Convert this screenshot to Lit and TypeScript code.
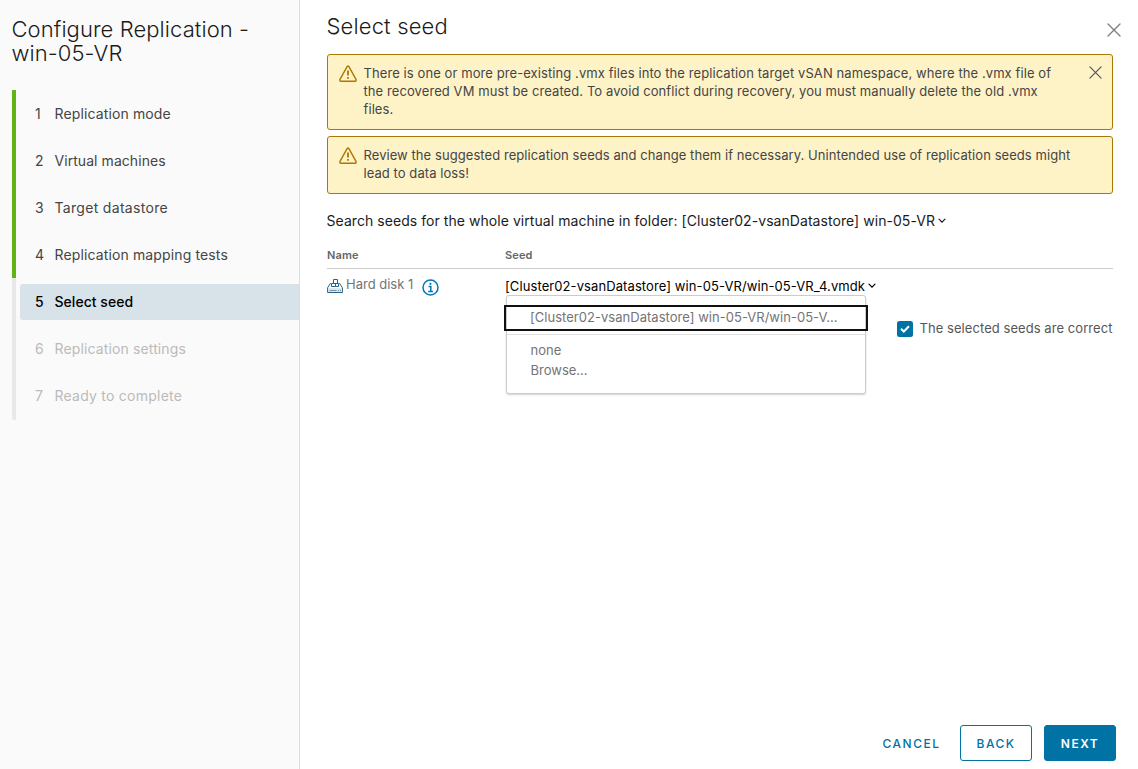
import { LitElement, html, css } from "lit";
import { customElement, property, state } from "lit/decorators.js";
import { classMap } from "lit/directives/class-map.js";

const closeIcon = (size: number) => html`<svg width=${size} height=${size} viewBox="0 0 14 14" fill="none" stroke="currentColor" stroke-width="1.3" stroke-linecap="round"><path d="M1 1L13 13M13 1L1 13" /></svg>`;
const caret = html`<svg class="caret" width="8" height="6" viewBox="0 0 8 6" fill="none" stroke="currentColor" stroke-width="1.2" stroke-linecap="round"><path d="M1 1.2L4 4.2L7 1.2" /></svg>`;

@customElement("wizard-alert")
class WizardAlert extends LitElement {
  @property({ type: Array }) lines: string[] = [];
  @property({ type: Boolean }) closable = false;

  static styles = css`
    :host {
      display: flex;
      box-sizing: border-box;
      padding: 9px 10px 11px 11px;
      border: 1px solid #ad7600;
      border-radius: 3px;
      background: #fef3c7;
      color: #454545;
    }
    .icon { flex: none; display: block; width: 18px; height: 18px; margin: 1px 6.5px 0 0; }
    .text { flex: 1; font-size: 13px; line-height: 18px; letter-spacing: 0.085px; white-space: nowrap; }
    .long { letter-spacing: 0.065px; }
    .close { color: #565656; height: 14px; margin-top: 2px; }
    .close svg { display: block; }
  `;

  render() {
    return html`
      <svg class="icon" viewBox="0 0 18 18" fill="none" stroke="#ad7600" stroke-width="1.4" stroke-linejoin="round">
        <path d="M8.1 1.7Q9 .4 9.9 1.7L17 14.3Q17.6 16 16 16.2H2Q.4 16 1 14.3Z" />
        <path d="M9 5.4V10.4M9 12V13.8" stroke-width="1.8" />
      </svg>
      <div class="text">${this.lines.map((l) => html`<div class=${classMap({ long: !this.closable })}>${l}</div>`)}</div>
      ${this.closable ? html`<span class="close">${closeIcon(13)}</span>` : null}
    `;
  }
}

@customElement("app-root")
class AppRoot extends LitElement {
  @state() private current = 5;

  private steps = [
    "Replication mode",
    "Virtual machines",
    "Target datastore",
    "Replication mapping tests",
    "Select seed",
    "Replication settings",
    "Ready to complete",
  ];

  static styles = css`
    :host {
      display: flex;
      width: 1138px;
      height: 769px;
      overflow: hidden;
      box-sizing: border-box;
      background: #fff;
      font-family: Inter, "Open Sans", sans-serif;
      color: #666;
    }
    * { box-sizing: border-box; }
    h1, h2 { margin: 0; color: #1b1b1b; font-size: 22px; font-weight: 300; line-height: 24px; letter-spacing: 0.08px; white-space: nowrap; }
    h2 { letter-spacing: 0.15px; }
    .side { flex: none; width: 300px; background: #fafafa; border-right: 1px solid #ddd; padding: 17px 0 0 11.5px; }
    .steps { margin: 25px 0 0 0.5px; }
    .step { display: flex; height: 47px; border-left: 4px solid #60b515; padding: 6px 0 5px 4px; }
    .step.upcoming, .step.current { border-left-color: #e8e8e8; }
    .step:last-child { height: 48px; padding-bottom: 6px; border-bottom-left-radius: 2px; }
    .label { flex: 1; display: flex; align-items: center; padding: 0 0 2px 15px; border-radius: 3px 0 0 3px; font-size: 14px; letter-spacing: 0.13px; color: #454545; }
    .num { width: 19.5px; }
    .s2 { letter-spacing: 0.06px; }
    .s3 { letter-spacing: 0.31px; }
    .s7 { letter-spacing: 0.24px; }
    .current .label { background: #d8e3e9; color: #000; font-weight: 500; letter-spacing: 0.03px; }
    .upcoming .label { color: #bababa; }

    .main { flex: 1; min-width: 0; display: flex; flex-direction: column; padding: 14px 17px 8px 27px; }
    .head { display: flex; justify-content: space-between; height: 40px; margin-left: -0.5px; }
    .head svg { display: block; margin-top: 9px; color: #7c7c7c; }
    .body { width: 786px; display: flex; flex-direction: column; }
    .alerts { display: grid; gap: 6px; }
    .alerts .first { height: 76px; }
    .alerts .second { height: 58px; }
    .caret { margin-left: 3px; }
    .search { display: flex; align-items: center; height: 20px; margin: 16px 0 0 -0.5px; font-size: 14px; letter-spacing: 0.055px; color: #1b1b1b; white-space: nowrap; }
    .search .caret { margin-top: 2px; }
    .grid { display: grid; grid-template-columns: 178px 1fr; }
    .thead { margin-top: 15px; height: 24px; align-items: center; padding-bottom: 3px; border-bottom: 1px solid #ccc; font-size: 11px; font-weight: 600; letter-spacing: 0.15px; color: #666; }
    .row { height: 50px; padding-top: 7px; }
    .disk { display: flex; height: 22px; font-size: 13px; color: #747474; }
    .disk .name { margin: 0 7.5px 0 3px; line-height: 17px; width: 68px; white-space: nowrap; }
    .drive { margin-top: 2px; }
    .info { margin-top: 2.5px; }
    .seed { position: relative; }
    .value { display: flex; align-items: center; height: 20px; font-size: 13px; letter-spacing: 0.095px; color: #000; white-space: nowrap; }
    .menu { position: absolute; top: 19px; left: 1px; width: 360px; height: 99px; border: 1px solid #ccc; border-radius: 3px; background: #fff; box-shadow: 0 1px 2px rgba(0, 0, 0, 0.18); font-size: 13px; color: #747474; white-space: nowrap; }
    .focus { height: 26px; margin: 9px -3px 0; padding-left: 24px; border: 2px solid #111; line-height: 21px; letter-spacing: 0.03px; }
    .rule { height: 1px; margin: 3px 0 5px; background: #e0e0e0; }
    .item { height: 20px; padding-left: 23.5px; line-height: 20px; }
    .confirm { display: flex; align-items: center; align-self: flex-end; height: 20px; font-size: 13px; letter-spacing: 0.06px; color: #565656; white-space: nowrap; }
    .confirm span { width: 193.5px; padding-bottom: 2px; }
    .check { margin-right: 6.5px; }
    .foot { display: flex; justify-content: flex-end; margin: auto 5px 0 0; }
    .btn { height: 36px; width: 72px; border: 1px solid #0072a3; border-radius: 3px; background: #fff; color: #0072a3; font: 500 12px/34px Inter, sans-serif; letter-spacing: 1.5px; text-align: center; padding: 1px 0 0; white-space: nowrap; }
    .btn.text { border-color: transparent; width: 90px; margin-right: 3.5px; }
    .btn.solid { background: #0072a3; color: #fff; font-weight: 600; margin-left: 12px; }
  `;

  render() {
    return html`
      <nav class="side">
        <h1><div>Configure Replication -</div><div>win-05-VR</div></h1>
        <div class="steps">
          ${this.steps.map((name, i) => html`
            <div class=${classMap({ step: true, current: i + 1 === this.current, upcoming: i + 1 > this.current })}>
              <div class="label"><span class="num">${i + 1}</span><span class="s${i + 1}">${name}</span></div>
            </div>`)}
        </div>
      </nav>
      <main class="main">
        <div class="head"><h2>Select seed</h2>${closeIcon(14)}</div>
        <div class="body">
          <div class="alerts">
            <wizard-alert class="first" closable .lines=${[
              "There is one or more pre-existing .vmx files into the replication target vSAN namespace, where the .vmx file of",
              "the recovered VM must be created. To avoid conflict during recovery, you must manually delete the old .vmx",
              "files.",
            ]}></wizard-alert>
            <wizard-alert class="second" .lines=${[
              "Review the suggested replication seeds and change them if necessary. Unintended use of replication seeds might",
              "lead to data loss!",
            ]}></wizard-alert>
          </div>
          <div class="search"><span>Search seeds for the whole virtual machine in folder: [Cluster02-vsanDatastore] win-05-VR</span>${caret}</div>
          <div class="grid thead"><span>Name</span><span>Seed</span></div>
          <div class="grid row">
            <div class="disk">
              <svg class="drive" width="16" height="16" viewBox="0 0 16 16" fill="none" stroke="#25628a">
                <path d="M4 5.5H3.3L.6 9.8V14.5H15.4V9.8L12.7 5.5H12" />
                <path d="M1.1 10.2H14.9V14H1.1Z" fill="#d5e5ee" stroke="none" />
                <path d="M4.5 5.5H8.5V8.5H4.5ZM8.5 5.5H11.5V8.5H8.5ZM6.5 1.5H10.5V5.5H6.5Z" fill="#fff" />
                <path d="M2.5 12.5H9.5M11 12.5H12M13 12.5H14" stroke="#8794a0" />
              </svg>
              <span class="name">Hard disk 1</span>
              <svg class="info" width="17" height="17" viewBox="0 0 17 17" fill="none" stroke="#0079b8" stroke-width="1.5">
                <circle cx="8.5" cy="8.5" r="7.5" />
                <path d="M6.6 7.5H8.8V12.5M6.2 12.6H11" />
                <circle cx="8.4" cy="4.8" r="1.1" fill="#0079b8" stroke="none" />
              </svg>
            </div>
            <div class="seed">
              <div class="value"><span>[Cluster02-vsanDatastore] win-05-VR/win-05-VR_4.vmdk</span>${caret}</div>
              <div class="menu">
                <div class="focus">[Cluster02-vsanDatastore] win-05-VR/win-05-V...</div>
                <div class="rule"></div>
                <div class="item">none</div>
                <div class="item">Browse...</div>
              </div>
            </div>
          </div>
          <label class="confirm">
            <svg class="check" width="16" height="16" viewBox="0 0 16 16"><rect width="16" height="16" rx="2.5" fill="#0072a3" /><path d="M4 7.8L6.8 10.5L12 5.2" fill="none" stroke="#fff" stroke-width="2" /></svg>
            <span>The selected seeds are correct</span>
          </label>
        </div>
        <div class="foot">
          <button class="btn text">CANCEL</button>
          <button class="btn">BACK</button>
          <button class="btn solid">NEXT</button>
        </div>
      </main>
    `;
  }
}
